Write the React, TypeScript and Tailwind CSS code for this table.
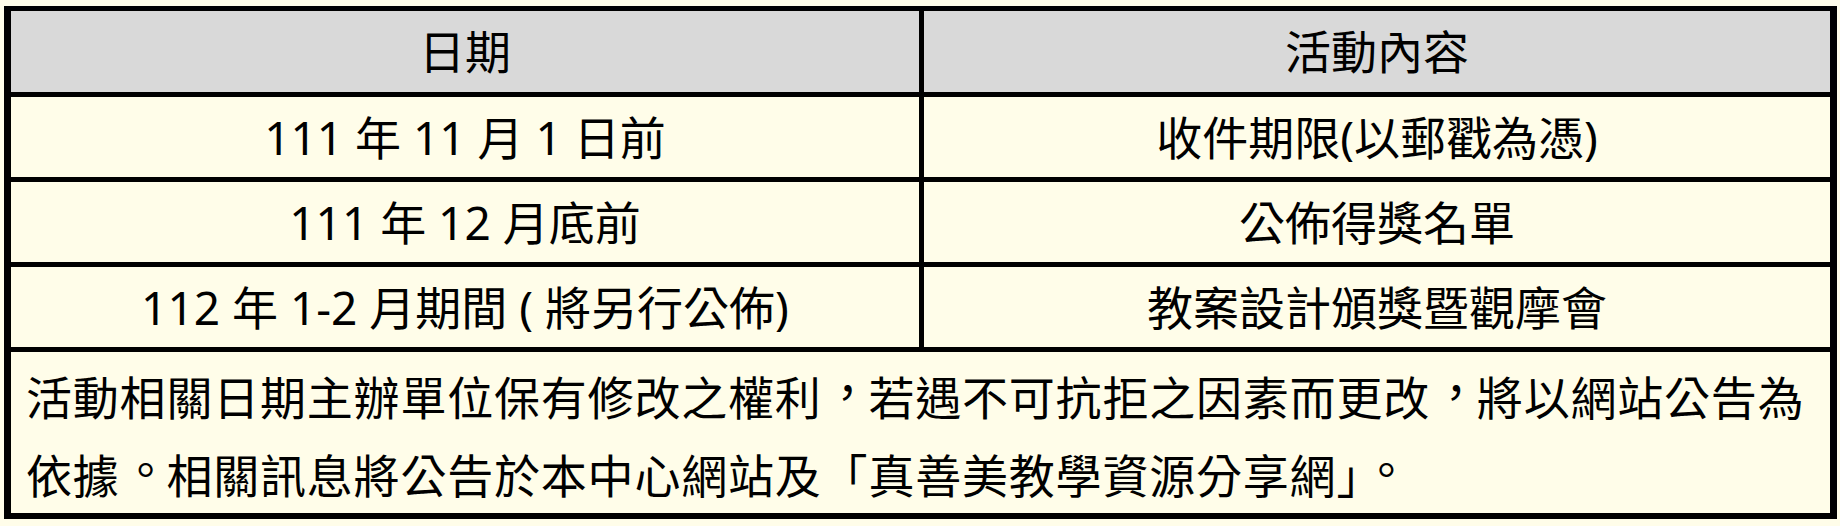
import React from 'react';

const rows = [
  { date: '111 年 11 月 1 日前', activity: '收件期限(以郵戳為憑)' },
  { date: '111 年 12 月底前', activity: '公佈得獎名單' },
  { date: '112 年 1-2 月期間 ( 將另行公佈)', activity: '教案設計頒獎暨觀摩會' },
];

const font = { fontFamily: '"Noto Sans", "Noto Sans CJK TC", sans-serif' };

// Taiwanese style: full-width punctuation sits nearer the middle of its box
function P({ c }: { c: string }) {
  return <span className="pl-[3px] tracking-[-2.2px] leading-none align-[6px]">{c}</span>;
}

export default function App() {
  return (
    <div lang="zh-TW" className="w-[1840px] h-[526px] bg-[#fffde9] pt-[6px] pl-[4px]" style={font}>
      <div className="w-[1833px] bg-black pt-[5px] pl-[7px] pr-[7px] pb-[6px]">
        <div className="grid grid-cols-[908px_906px] grid-rows-[81px_80px_80px_80px_161px] gap-[5px] text-[46px] text-black">
          <div className="bg-[#d9d9d9] flex items-center justify-center">日期</div>
          <div className="bg-[#d9d9d9] flex items-center justify-center">活動內容</div>
          {rows.map((r) => (
            <React.Fragment key={r.date}>
              <div className="bg-[#fffde9] flex items-center justify-center">{r.date}</div>
              <div className="bg-[#fffde9] flex items-center justify-center">{r.activity}</div>
            </React.Fragment>
          ))}
          <div className="col-span-2 bg-[#fffde9] pl-[15px] pt-[6px] leading-[78px] tracking-[0.8px]">
            活動相關日期主辦單位保有修改之權利<P c="，" />若遇不可抗拒之因素而更改<P c="，" />將以網站公告為
            <br />
            依據<P c="。" />相關訊息將公告於本中心網站及「真善美教學資源分享網」<P c="。" />
          </div>
        </div>
      </div>
    </div>
  );
}
